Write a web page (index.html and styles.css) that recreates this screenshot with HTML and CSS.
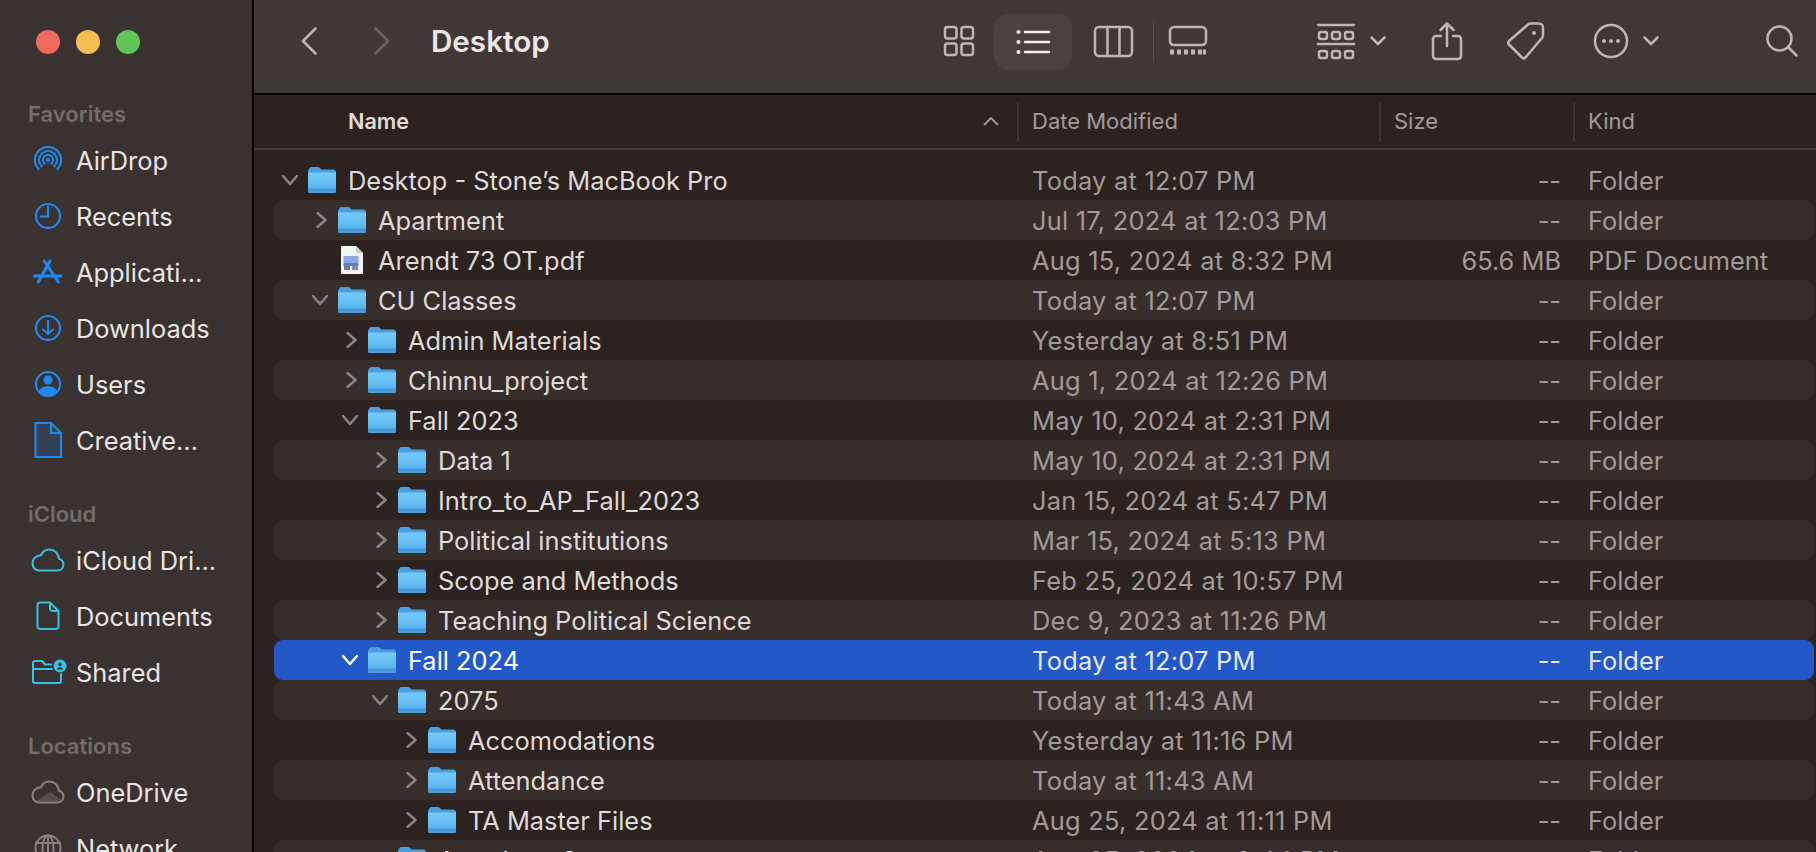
FILE: index.html
```html
<!DOCTYPE html>
<html>

<head>
  <meta charset="utf-8">
  <title>Desktop</title>
  <link rel="stylesheet" href="styles.css">
</head>

<body>
  <!-- shared icons -->
  <svg class="icon-defs" width="0" height="0">
    <defs>
      <linearGradient id="folderBody" x1="0" y1="0" x2="0" y2="1">
        <stop offset="0" stop-color="#74caf9" />
        <stop offset="1" stop-color="#57b0ee" />
      </linearGradient>
      <symbol id="folder" viewBox="0 0 28 26">
        <path d="M1 2.5A2.5 2.5 0 0 1 3.5 0h6.3c1 0 1.5.3 2.2 1l1.4 1.4h11.6A3 3 0 0 1 28 5.4V8H0V3z" fill="#4a9fdf" />
        <path d="M0 5.4h28V24a2 2 0 0 1-2 2H2a2 2 0 0 1-2-2z" fill="url(#folderBody)" />
        <path d="M0 21h28V24a2 2 0 0 1-2 2H2a2 2 0 0 1-2-2z" fill="#4ba0e0" />
        <path d="M0 23.200h28" stroke="#3f8ccd" stroke-width=".8" />
      </symbol>
      <symbol id="chev-right" viewBox="0 0 16 16">
        <path d="M5.500 1l8 7-8 7" fill="none" stroke="currentColor" stroke-width="2.500" stroke-linecap="round" stroke-linejoin="round" />
      </symbol>
      <symbol id="chev-down" viewBox="0 0 16 16">
        <path d="M1 4l7 8 7-8" fill="none" stroke="currentColor" stroke-width="2.500" stroke-linecap="round" stroke-linejoin="round" />
      </symbol>
      <symbol id="cloud" viewBox="0 0 36 36">
        <path d="M9 28.5h18.5a6 6 0 0 0 1.5-11.8C28.5 11 24 7.5 19.5 7.5c-4 0-7 2.2-8.6 5.8C5.5 14 2.5 17.3 2.5 21.5c0 4 3 7 6.5 7z" />
      </symbol>
    </defs>
  </svg>

  <div class="window">
    <!-- Sidebar -->
    <aside class="sidebar">
      <div class="lights">
        <span class="light light-red"></span>
        <span class="light light-yellow"></span>
        <span class="light light-green"></span>
      </div>

      <h2 class="side-title side-title-first">Favorites</h2>
      <div class="side-item">
        <svg class="side-icon blue" viewBox="0 0 36 36"><path d="M8.8 27.2A13 13 0 1 1 27.2 27.2M11.6 24.4A9 9 0 1 1 24.4 24.4M14.5 21.5A5 5 0 1 1 21.5 21.5" /><circle class="solid" cx="18" cy="18" r="2" /></svg>
        <span>AirDrop</span>
      </div>
      <div class="side-item">
        <svg class="side-icon blue" viewBox="0 0 36 36"><circle cx="18" cy="18" r="12" /><path d="M18 9v9.5h-7.5" /></svg>
        <span>Recents</span>
      </div>
      <div class="side-item">
        <svg class="side-icon blue apps" viewBox="0 0 36 36"><path d="M14.3 7l14 21M20 7L8.3 28M4.5 22h26.5" /></svg>
        <span>Applicati...</span>
      </div>
      <div class="side-item">
        <svg class="side-icon blue" viewBox="0 0 36 36"><circle cx="18" cy="18" r="12" /><path d="M18 11v13M13 19.5l5 4.5 5-4.5" /></svg>
        <span>Downloads</span>
      </div>
      <div class="side-item">
        <svg class="side-icon blue" viewBox="0 0 36 36"><circle cx="18" cy="18" r="12" /><circle class="solid" cx="18" cy="14" r="4.6" /><path class="solid" d="M8.5 25.5c2-4 5.5-5.2 9.5-5.2s7.5 1.2 9.5 5.2a12.5 12.5 0 0 1-19 0z" /></svg>
        <span>Users</span>
      </div>
      <div class="side-item">
        <svg class="side-icon blue doc-tint" viewBox="0 0 36 36"><path d="M5.5 1H21L31 11V35H5.5z" /><path d="M21 1v10h10" /></svg>
        <span>Creative...</span>
      </div>

      <h2 class="side-title">iCloud</h2>
      <div class="side-item">
        <svg class="side-icon cyan" viewBox="0 0 36 36"><use href="#cloud" /></svg>
        <span>iCloud Dri...</span>
      </div>
      <div class="side-item">
        <svg class="side-icon cyan" viewBox="0 0 36 36"><path d="M10 4.5h10l8.5 8.5v15.5a2.5 2.5 0 0 1-2.5 2.5H10a2.5 2.5 0 0 1-2.5-2.5V7A2.5 2.5 0 0 1 10 4.5zM20 4.5v6a2.5 2.5 0 0 0 2.5 2.5h6" /></svg>
        <span>Documents</span>
      </div>
      <div class="side-item">
        <svg class="side-icon cyan" viewBox="0 0 36 36"><path d="M3 15h19M23 29H5a2 2 0 0 1-2-2V9a2 2 0 0 1 2-2h7l3 3.5h6M31 20v7a2 2 0 0 1-2 2h-6" /><circle class="solid" cx="30" cy="12" r="6.5" /><circle cx="30" cy="10.2" r="1.8" class="cut" /><path class="cut" d="M26.8 15.5c.6-1.6 1.8-2.2 3.2-2.2s2.6.6 3.2 2.2z" /></svg>
        <span>Shared</span>
      </div>

      <h2 class="side-title">Locations</h2>
      <div class="side-item">
        <svg class="side-icon grey" viewBox="0 0 36 36"><use href="#cloud" /><path class="wash" d="M6 27l14-9 13 9z" /></svg>
        <span>OneDrive</span>
      </div>
      <div class="side-item">
        <svg class="side-icon grey" viewBox="0 0 36 36"><circle cx="18" cy="18" r="12.5" /><ellipse cx="18" cy="18" rx="5.5" ry="12.5" /><path d="M6 13h24M6 23h24M18 5.5v25" /></svg>
        <span>Network</span>
      </div>
    </aside>

    <main class="content">
      <!-- Toolbar -->
      <header class="toolbar">
        <svg class="tb-back" width="16" height="28" viewBox="0 0 16 28"><path d="M14.5 1.5L2 14l12.5 12.5" /></svg>
        <svg class="tb-forward" width="16" height="28" viewBox="0 0 16 28"><path d="M1.5 1.5L14 14 1.5 26.5" /></svg>
        <h1 class="tb-title">Desktop</h1>

        <svg class="tb-grid" width="30" height="30" viewBox="0 0 30 30"><rect x="1" y="1" width="11.5" height="11.5" rx="2.5" /><rect x="17.5" y="1" width="11.5" height="11.5" rx="2.5" /><rect x="1" y="17.5" width="11.5" height="11.5" rx="2.5" /><rect x="17.5" y="17.5" width="11.5" height="11.5" rx="2.5" /></svg>
        <div class="tb-active">
          <svg width="34" height="24" viewBox="0 0 34 24"><path class="bright" d="M9 2h24M9 12h24M9 22h24" /><circle class="dot" cx="2.5" cy="2" r="2" /><circle class="dot" cx="2.5" cy="12" r="2" /><circle class="dot" cx="2.5" cy="22" r="2" /></svg>
        </div>
        <svg class="tb-columns" width="39" height="31" viewBox="0 0 39 31"><rect x="1" y="1" width="37" height="29" rx="4" /><path d="M13.5 1v29M25.5 1v29" /></svg>
        <span class="tb-sep"></span>
        <svg class="tb-gallery" width="38" height="30" viewBox="0 0 38 30"><rect x="1" y="1" width="36" height="18" rx="4" /><path class="squares" d="M1 26h4M8 26h4M15 26h4M22 26h4M29 26h4M34 26h3" /></svg>
        <svg class="tb-group" width="36" height="35" viewBox="0 0 36 35"><path d="M0 1h36M0 20h36" /><rect x="1" y="8" width="8" height="7" rx="2" /><rect x="14" y="8" width="8" height="7" rx="2" /><rect x="27" y="8" width="8" height="7" rx="2" /><rect x="1" y="27" width="8" height="7" rx="2" /><rect x="14" y="27" width="8" height="7" rx="2" /><rect x="27" y="27" width="8" height="7" rx="2" /></svg>
        <svg class="tb-mini" width="16" height="10" viewBox="0 0 16 10"><path d="M1.5 1.5L8 8l6.5-6.5" /></svg>
        <svg class="tb-share" width="30" height="38" viewBox="0 0 30 38"><path d="M15 24V2M8.5 8L15 1.5 21.5 8M9 14H4a3 3 0 0 0-3 3v17a3 3 0 0 0 3 3h22a3 3 0 0 0 3-3V17a3 3 0 0 0-3-3h-5" /></svg>
        <svg class="tb-tag" width="38" height="38" viewBox="0 0 38 38"><path d="M24 1.5h8a4 4 0 0 1 4 4v7.5a4 4 0 0 1-1 3L18.500 35.500a2.500 2.500 0 0 1-3.500 0L2 22.500a2.500 2.500 0 0 1 0-3.500L21 2.500a4 4 0 0 1 3-1z" /><circle class="dot" cx="27" cy="11" r="2" /></svg>
        <svg class="tb-more" width="34" height="34" viewBox="0 0 34 34"><circle cx="17" cy="17" r="16" /><circle class="dot" cx="10" cy="17" r="2" /><circle class="dot" cx="17" cy="17" r="2" /><circle class="dot" cx="24" cy="17" r="2" /></svg>
        <svg class="tb-mini tb-mini-more" width="16" height="10" viewBox="0 0 16 10"><path d="M1.5 1.5L8 8l6.5-6.5" /></svg>
        <svg class="tb-search" width="33" height="33" viewBox="0 0 33 33"><circle cx="13.500" cy="13.500" r="12" /><path d="M22.500 22.500l8 8" /></svg>
      </header>

      <!-- Column headers -->
      <div class="columns">
        <div class="col col-name">
          <span>Name</span>
          <svg width="16" height="10" viewBox="0 0 16 10"><path d="M1.500 8.500L8 2l6.500 6.500" /></svg>
        </div>
        <div class="col">Date Modified</div>
        <div class="col">Size</div>
        <div class="col">Kind</div>
      </div>

      <!-- File list -->
      <div class="list">
        <div class="row">
          <div class="cell-name d0"><svg class="chev"><use href="#chev-down" /></svg><svg class="folder"><use href="#folder" /></svg><span>Desktop - Stone’s MacBook Pro</span></div>
          <span class="date">Today at 12:07 PM</span><span class="size">--</span><span class="kind">Folder</span>
        </div>
        <div class="row stripe">
          <div class="cell-name d1"><svg class="chev"><use href="#chev-right" /></svg><svg class="folder"><use href="#folder" /></svg><span>Apartment</span></div>
          <span class="date">Jul 17, 2024 at 12:03 PM</span><span class="size">--</span><span class="kind">Folder</span>
        </div>
        <div class="row">
          <div class="cell-name d1"><span class="chev"></span>
            <svg class="folder file" viewBox="0 0 28 30"><path d="M3 1h15l7 7v21H3z" fill="#f3f3f3" /><path d="M18 1l7 7h-7z" fill="#c9c9c9" /><rect x="5.500" y="11" width="15" height="7" fill="#8fa9e6" /><rect x="5.500" y="18" width="15" height="3" fill="#5d7cc4" /><rect x="6" y="21" width="6" height="4" fill="#7b7f8a" /><rect x="14" y="21" width="6" height="4" fill="#8a8e99" /></svg>
            <span>Arendt 73 OT.pdf</span></div>
          <span class="date">Aug 15, 2024 at 8:32 PM</span><span class="size">65.6 MB</span><span class="kind">PDF Document</span>
        </div>
        <div class="row stripe">
          <div class="cell-name d1"><svg class="chev"><use href="#chev-down" /></svg><svg class="folder"><use href="#folder" /></svg><span>CU Classes</span></div>
          <span class="date">Today at 12:07 PM</span><span class="size">--</span><span class="kind">Folder</span>
        </div>
        <div class="row">
          <div class="cell-name d2"><svg class="chev"><use href="#chev-right" /></svg><svg class="folder"><use href="#folder" /></svg><span>Admin Materials</span></div>
          <span class="date">Yesterday at 8:51 PM</span><span class="size">--</span><span class="kind">Folder</span>
        </div>
        <div class="row stripe">
          <div class="cell-name d2"><svg class="chev"><use href="#chev-right" /></svg><svg class="folder"><use href="#folder" /></svg><span>Chinnu_project</span></div>
          <span class="date">Aug 1, 2024 at 12:26 PM</span><span class="size">--</span><span class="kind">Folder</span>
        </div>
        <div class="row">
          <div class="cell-name d2"><svg class="chev"><use href="#chev-down" /></svg><svg class="folder"><use href="#folder" /></svg><span>Fall 2023</span></div>
          <span class="date">May 10, 2024 at 2:31 PM</span><span class="size">--</span><span class="kind">Folder</span>
        </div>
        <div class="row stripe">
          <div class="cell-name d3"><svg class="chev"><use href="#chev-right" /></svg><svg class="folder"><use href="#folder" /></svg><span>Data 1</span></div>
          <span class="date">May 10, 2024 at 2:31 PM</span><span class="size">--</span><span class="kind">Folder</span>
        </div>
        <div class="row">
          <div class="cell-name d3"><svg class="chev"><use href="#chev-right" /></svg><svg class="folder"><use href="#folder" /></svg><span>Intro_to_AP_Fall_2023</span></div>
          <span class="date">Jan 15, 2024 at 5:47 PM</span><span class="size">--</span><span class="kind">Folder</span>
        </div>
        <div class="row stripe">
          <div class="cell-name d3"><svg class="chev"><use href="#chev-right" /></svg><svg class="folder"><use href="#folder" /></svg><span>Political institutions</span></div>
          <span class="date">Mar 15, 2024 at 5:13 PM</span><span class="size">--</span><span class="kind">Folder</span>
        </div>
        <div class="row">
          <div class="cell-name d3"><svg class="chev"><use href="#chev-right" /></svg><svg class="folder"><use href="#folder" /></svg><span>Scope and Methods</span></div>
          <span class="date">Feb 25, 2024 at 10:57 PM</span><span class="size">--</span><span class="kind">Folder</span>
        </div>
        <div class="row stripe">
          <div class="cell-name d3"><svg class="chev"><use href="#chev-right" /></svg><svg class="folder"><use href="#folder" /></svg><span>Teaching Political Science</span></div>
          <span class="date">Dec 9, 2023 at 11:26 PM</span><span class="size">--</span><span class="kind">Folder</span>
        </div>
        <div class="row selected">
          <div class="cell-name d2"><svg class="chev"><use href="#chev-down" /></svg><svg class="folder"><use href="#folder" /></svg><span>Fall 2024</span></div>
          <span class="date">Today at 12:07 PM</span><span class="size">--</span><span class="kind">Folder</span>
        </div>
        <div class="row stripe">
          <div class="cell-name d3"><svg class="chev"><use href="#chev-down" /></svg><svg class="folder"><use href="#folder" /></svg><span>2075</span></div>
          <span class="date">Today at 11:43 AM</span><span class="size">--</span><span class="kind">Folder</span>
        </div>
        <div class="row">
          <div class="cell-name d4"><svg class="chev"><use href="#chev-right" /></svg><svg class="folder"><use href="#folder" /></svg><span>Accomodations</span></div>
          <span class="date">Yesterday at 11:16 PM</span><span class="size">--</span><span class="kind">Folder</span>
        </div>
        <div class="row stripe">
          <div class="cell-name d4"><svg class="chev"><use href="#chev-right" /></svg><svg class="folder"><use href="#folder" /></svg><span>Attendance</span></div>
          <span class="date">Today at 11:43 AM</span><span class="size">--</span><span class="kind">Folder</span>
        </div>
        <div class="row">
          <div class="cell-name d4"><svg class="chev"><use href="#chev-right" /></svg><svg class="folder"><use href="#folder" /></svg><span>TA Master Files</span></div>
          <span class="date">Aug 25, 2024 at 11:11 PM</span><span class="size">--</span><span class="kind">Folder</span>
        </div>
        <div class="row stripe">
          <div class="cell-name d3"><svg class="chev"><use href="#chev-down" /></svg><svg class="folder"><use href="#folder" /></svg><span>American Gov</span></div>
          <span class="date">Aug 25, 2024 at 3:44 PM</span><span class="size">--</span><span class="kind">Folder</span>
        </div>
      </div>
    </main>
  </div>
</body>

</html>
```

FILE: styles.css
```css
* {
  box-sizing: border-box;
}

html,
body {
  margin: 0;
  height: 852px;
  overflow: hidden;
  background: #2c2220;
  font-family: Inter, "Noto Sans", sans-serif;
}

.icon-defs {
  display: block;
  height: 0;
}

.window {
  display: flex;
  height: 852px;
  overflow: hidden;
}

/* Sidebar */
.sidebar {
  flex: 0 0 254px;
  height: 852px;
  overflow: hidden;
  background: #3a3230;
  border-right: 2px solid #000;
  padding-top: 30px;
}

.lights {
  display: flex;
  gap: 16px;
  padding-left: 36px;
}

.light {
  width: 24px;
  height: 24px;
  border-radius: 50%;
}

.light-red {
  background: #ee6a5f;
}

.light-yellow {
  background: #f5bd4f;
}

.light-green {
  background: #61c454;
}

.side-title {
  margin: 31px 0 1px;
  padding-left: 28px;
  height: 32px;
  line-height: 30px;
  font-size: 22px;
  font-weight: 600;
  color: #756d6b;
}

.side-title-first {
  margin: 44px 0 2px;
  line-height: 32px;
}

.side-item {
  display: flex;
  align-items: center;
  gap: 10px;
  height: 56px;
  padding-left: 30px;
  font-size: 25.4px;
  color: #e9e5e4;
}

.side-icon {
  flex: none;
  width: 36px;
  height: 36px;
  fill: none;
  stroke-width: 2;
  stroke-linecap: round;
  stroke-linejoin: round;
  overflow: visible;
}

.side-icon .solid {
  stroke: none;
}

.side-icon .cut {
  fill: #3a3230;
  stroke: none;
}

.blue {
  stroke: #1c8cf5;
}

.blue .solid {
  fill: #1c8cf5;
}

.cyan {
  stroke: #35c4e4;
}

.cyan .solid {
  fill: #35c4e4;
}

.grey {
  stroke: #8b8381;
}

.grey .wash {
  fill: #6b6361;
  stroke: none;
  opacity: .6;
}

.apps {
  stroke-width: 3;
}

.doc-tint path:first-child {
  fill: #323f55;
}

.doc-tint {
  stroke-linecap: butt;
  stroke-linejoin: miter;
}

/* Toolbar */
.content {
  flex: 1;
  min-width: 0;
  display: flex;
  flex-direction: column;
  height: 852px;
  overflow: hidden;
}

.toolbar {
  flex: 0 0 95px;
  display: flex;
  align-items: center;
  background: #403837;
  border-bottom: 2px solid #000;
  padding: 0 0 11px 47px;
}

.toolbar svg {
  flex: none;
  fill: none;
  stroke: #bfb7b5;
  stroke-width: 2.500;
  stroke-linecap: round;
  stroke-linejoin: round;
  overflow: visible;
}

.toolbar .dot {
  fill: #bfb7b5;
  stroke: none;
}

.tb-back {
  stroke: #b5adab;
}

.toolbar .tb-forward {
  margin-left: 57px;
  stroke: #6c6462;
}

.tb-title {
  margin: 0 0 0 41px;
  width: 120px;
  font-size: 29.6px;
  font-weight: 600;
  color: #ebe7e6;
  white-space: nowrap;
}

.toolbar .tb-grid {
  margin-left: 393px;
}

.tb-active {
  margin: 2px 0 0 20px;
  width: 78px;
  height: 56px;
  display: flex;
  align-items: center;
  justify-content: center;
  background: #4a4240;
  border-radius: 14px;
}

.toolbar .tb-active .bright {
  stroke: #f2efee;
}

.toolbar .tb-active .dot {
  fill: #f2efee;
}

.toolbar .tb-columns {
  margin-left: 22px;
}

.tb-sep {
  flex: none;
  margin-left: 20px;
  width: 1px;
  height: 40px;
  background: #565050;
}

.toolbar .tb-gallery {
  margin-left: 15px;
}

.toolbar .tb-gallery .squares {
  stroke-width: 5;
  stroke-linecap: butt;
}

.toolbar .tb-group {
  margin-left: 111px;
}

.toolbar .tb-mini {
  margin-left: 16px;
}

.toolbar .tb-share {
  margin-left: 46px;
}

.toolbar .tb-tag {
  margin-left: 45px;
}

.toolbar .tb-more {
  margin-left: 49px;
}

.toolbar .tb-mini-more {
  margin-left: 15px;
}

.toolbar .tb-search {
  margin-left: 107px;
}

/* Column headers */
.columns {
  flex: 0 0 55px;
  display: grid;
  grid-template-columns: 763px 362px 194px 1fr;
  align-items: center;
  border-bottom: 2px solid #463d3b;
  font-size: 22px;
  color: #a39c9a;
}

.col {
  height: 38px;
  line-height: 36px;
  padding-left: 13px;
  border-left: 2px solid #3f3634;
}

.col-name {
  display: flex;
  align-items: center;
  justify-content: space-between;
  padding: 0 18px 2px 94px;
  border-left: 0;
  font-size: 21.6px;
  font-weight: 600;
  color: #e0dcdb;
}

.col-name svg {
  fill: none;
  stroke: #a39c9a;
  stroke-width: 1.800;
  stroke-linecap: round;
  stroke-linejoin: round;
}

/* File list */
.list {
  padding: 10px 2px 0 20px;
}

.row {
  display: grid;
  grid-template-columns: 758px 320px 209px 1fr;
  align-items: center;
  height: 40px;
  border-radius: 9px;
  font-size: 25.4px;
  color: #a29b99;
  white-space: nowrap;
}

.stripe {
  background: #372d2b;
}

.selected {
  background: #2358c9;
  color: #e6e8f4;
}

.cell-name {
  display: flex;
  align-items: center;
  color: #dfdbda;
}

.selected .cell-name {
  color: #fff;
}

.d0 {
  padding-left: 8px;
}

.d1 {
  padding-left: 38px;
}

.d2 {
  padding-left: 68px;
}

.d3 {
  padding-left: 98px;
}

.d4 {
  padding-left: 128px;
}

.chev {
  flex: none;
  width: 16px;
  height: 16px;
  margin-right: 10px;
  color: #8d8583;
}

.selected .chev {
  color: #fff;
}

.folder {
  flex: none;
  width: 28px;
  height: 26px;
  margin-right: 12px;
}

.file {
  height: 30px;
}

.date {
  letter-spacing: .25px;
}

.size {
  text-align: right;
}

.kind {
  padding-left: 27px;
}
```
